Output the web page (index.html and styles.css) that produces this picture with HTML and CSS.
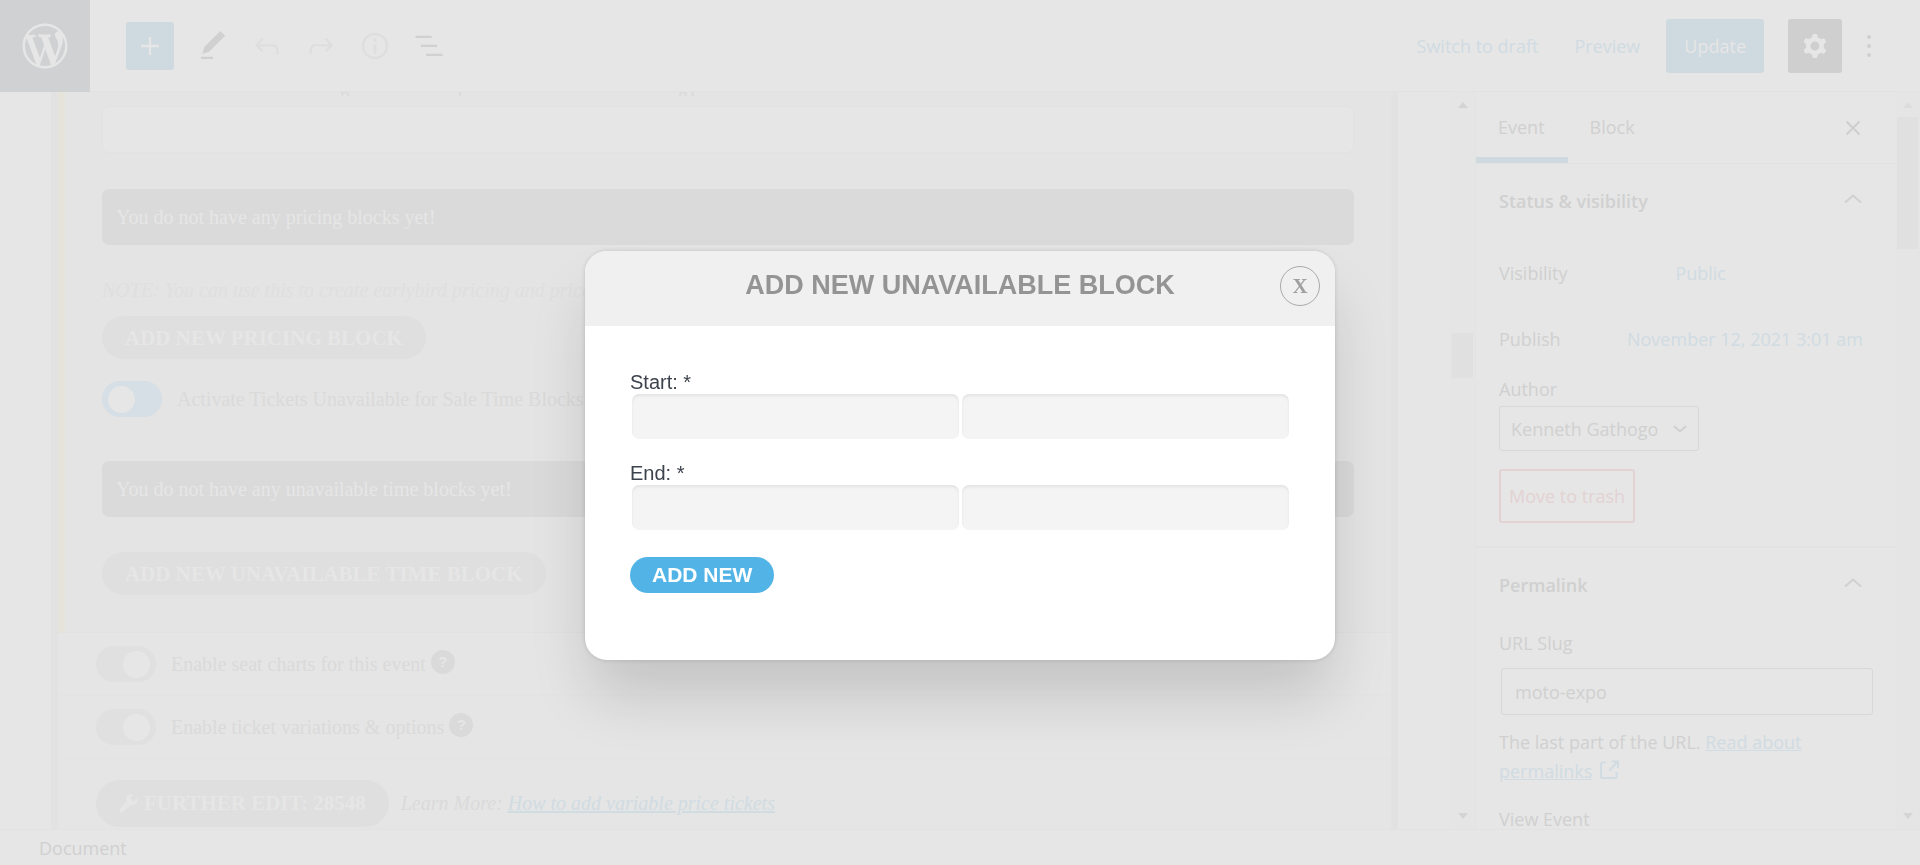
FILE: index.html
```html
<!DOCTYPE html>
<html lang="en">
<head>
<meta charset="utf-8">
<meta name="viewport" content="width=device-width, initial-scale=1">
<title>Edit Event</title>
<link rel="stylesheet" href="styles.css">
</head>
<body>
<div class="editor">
  <header class="topbar">
    <a class="logo" href="#" aria-label="View events">
      <svg width="54" height="54" viewBox="0 0 24 24" fill="currentColor"><path d="M20 10c0-5.51-4.49-10-10-10C4.48 0 0 4.49 0 10c0 5.52 4.48 10 10 10 5.51 0 10-4.48 10-10zM7.78 15.37L4.37 6.22c.55-.02 1.17-.08 1.17-.08.5-.06.44-1.13-.06-1.11 0 0-1.45.11-2.37.11-.18 0-.37 0-.58-.01C4.12 2.69 6.87 1.11 10 1.11c2.33 0 4.45.87 6.05 2.34-.68-.11-1.65.39-1.65 1.58 0 .74.45 1.36.9 2.1.35.61.55 1.36.55 2.46 0 1.49-1.4 5-1.4 5l-3.03-8.37c.54-.02.82-.17.82-.17.5-.05.44-1.25-.06-1.22 0 0-1.44.12-2.38.12-.87 0-2.33-.12-2.33-.12-.5-.03-.56 1.2-.06 1.22l.92.08 1.26 3.41zM17.41 10c.24-.64.74-1.87.43-4.25.7 1.29 1.05 2.71 1.05 4.25 0 3.29-1.73 6.24-4.4 7.78.97-2.59 1.94-5.2 2.92-7.78zM6.1 18.09C3.12 16.65 1.11 13.53 1.11 10c0-1.3.23-2.48.72-3.59C3.25 10.3 4.67 14.2 6.1 18.09zm4.03-6.63l2.58 6.98c-.86.29-1.76.45-2.71.45-.79 0-1.57-.11-2.29-.33.81-2.38 1.62-4.74 2.42-7.1z" transform="translate(2 2)"/></svg>
    </a>
    <div class="tools">
      <button class="tool add" aria-label="Add block"><svg width="36" height="36" viewBox="0 0 24 24" fill="currentColor"><path d="M18 11.2h-5.2V6h-1.6v5.2H6v1.6h5.2V18h1.6v-5.2H18z"/></svg></button>
      <button class="tool" aria-label="Tools"><svg width="36" height="36" viewBox="0 0 24 24" fill="currentColor"><path d="M20.1 5.1L16.9 2 6.2 12.7l-1.3 4.4 4.5-1.3L20.1 5.1zM4 19.2h8v1.5H4z"/></svg></button>
      <button class="tool faint" aria-label="Undo"><svg width="36" height="36" viewBox="0 0 24 24" fill="currentColor"><path d="M18.3 11.7c-.6-.6-1.4-.9-2.3-.9H6.7l2.9-3.3-1.1-1-4.5 5L8.5 16l1-1-2.7-2.7H16c.5 0 .9.2 1.3.5 1 1 1 3.4 1 4.5v.3h1.5v-.2c0-1.5 0-4.3-1.5-5.7z"/></svg></button>
      <button class="tool faint" aria-label="Redo"><svg width="36" height="36" viewBox="0 0 24 24" fill="currentColor"><path d="M15.6 6.5l-1.1 1 2.9 3.3H8c-.9 0-1.7.3-2.3.9-1.4 1.5-1.4 4.2-1.4 5.6v.2h1.5v-.3c0-1.1 0-3.5 1-4.5.3-.3.7-.5 1.3-.5h9.2L14.5 15l1.1 1.1 4.6-4.6-4.6-5z"/></svg></button>
      <button class="tool faint" aria-label="Details"><svg width="36" height="36" viewBox="0 0 24 24" fill="currentColor"><path d="M12 3.2c-4.8 0-8.8 3.9-8.8 8.8 0 4.8 3.9 8.8 8.8 8.8 4.8 0 8.8-3.9 8.8-8.8 0-4.8-4-8.8-8.8-8.8zm0 16c-4 0-7.2-3.3-7.2-7.2C4.8 8 8 4.8 12 4.8s7.2 3.3 7.2 7.2c0 4-3.2 7.2-7.2 7.2zM11 17h2v-6h-2v6zm0-8h2V7h-2v2z"/></svg></button>
      <button class="tool" aria-label="List view"><svg width="36" height="36" viewBox="0 0 24 24" fill="currentColor"><path d="M13.8 5.2H3v1.5h10.8V5.2zm-3.6 12v1.5H21v-1.5H10.2zm7.2-6H6.6v1.5h10.8v-1.5z"/></svg></button>
    </div>
    <div class="actions">
      <button class="text-btn">Switch to draft</button>
      <button class="text-btn">Preview</button>
      <button class="update">Update</button>
      <button class="settings" aria-label="Settings"><svg width="36" height="36" viewBox="0 0 24 24" fill="currentColor"><path fill-rule="evenodd" d="M10.289 4.836A1 1 0 0111.275 4h1.306a1 1 0 01.987.836l.244 1.466c.787.26 1.503.679 2.108 1.218l1.393-.522a1 1 0 011.216.437l.653 1.130a1 1 0 01-.23 1.273l-1.148.944a6.025 6.025 0 010 2.435l1.149.946a1 1 0 01.23 1.272l-.653 1.130a1 1 0 01-1.216.437l-1.394-.522c-.605.540-1.320.958-2.108 1.218l-.244 1.466a1 1 0 01-.987.836h-1.306a1 1 0 01-.986-.836l-.244-1.466a5.995 5.995 0 01-2.108-1.218l-1.394.522a1 1 0 01-1.217-.436l-.653-1.131a1 1 0 01.230-1.272l1.149-.946a6.026 6.026 0 010-2.435l-1.148-.944a1 1 0 01-.230-1.272l.653-1.131a1 1 0 011.217-.437l1.393.522a5.994 5.994 0 012.108-1.218l.244-1.466zM14.929 12a3 3 0 11-6 0 3 3 0 016 0z"/></svg></button>
      <button class="more" aria-label="Options"><svg width="36" height="36" viewBox="0 0 36 36" fill="currentColor"><circle cx="18" cy="9" r="2"/><circle cx="18" cy="18" r="2"/><circle cx="18" cy="27" r="2"/></svg></button>
    </div>
  </header>

  <div class="workspace">
    <main class="canvas">
      <div class="meta">
        <section class="ticket-panel">
          <div class="cut-line" aria-hidden="true"><span class="c1">p</span><span class="c2">(</span><span>g)</span></div>
          <input class="wide-input" type="text" aria-label="Ticket details">
          <p class="notice first">You do not have any pricing blocks yet!</p>
          <p class="note">NOTE: You can use this to create earlybird pricing and price</p>
          <button class="pill">ADD NEW PRICING BLOCK</button>
          <label class="switch-row"><input class="switch on" type="checkbox" checked><span>Activate Tickets Unavailable for Sale Time Blocks</span><i class="help">?</i></label>
          <p class="notice second">You do not have any unavailable time blocks yet!</p>
          <button class="pill">ADD NEW UNAVAILABLE TIME BLOCK</button>
        </section>
        <div class="row"><label class="switch-row"><input class="switch" type="checkbox"><span>Enable seat charts for this event</span><i class="help">?</i></label></div>
        <div class="row"><label class="switch-row"><input class="switch" type="checkbox"><span>Enable ticket variations &amp; options</span><i class="help">?</i></label></div>
        <div class="row last">
          <button class="pill further"><svg width="19" height="19" viewBox="0 0 20 20" fill="currentColor"><path d="M19 4.500l-3.200 3-3-.8-.7-3L15.300.7C12.600-.3 9.600.8 8.300 3.200c-.8 1.500-.8 3.200-.2 4.700L1 15.200c-1 1-1 2.600 0 3.600s2.600 1 3.600 0l7.200-7.300c2.300.8 4.900.1 6.500-1.800 1.300-1.500 1.500-3.500.7-5.200z"/></svg>FURTHER EDIT: 28548</button>
          <p class="learn">Learn More: <a href="#">How to add variable price tickets</a></p>
        </div>
      </div>
    </main>
    <div class="scrollbar main-scroll"><span class="arrow up"></span><span class="thumb"></span><span class="arrow down"></span></div>

    <aside class="sidebar">
      <div class="tabs">
        <button class="tab active">Event</button>
        <button class="tab">Block</button>
        <button class="close-side" aria-label="Close settings"><svg width="16" height="16" viewBox="0 0 16 16" fill="none" stroke="currentColor" stroke-width="2"><path d="M1.500 1.500l13 13M14.500 1.500l-13 13"/></svg></button>
      </div>
      <section class="group status">
        <h2 class="group-title">Status &amp; visibility<svg width="18" height="10" viewBox="0 0 18 10" fill="none" stroke="currentColor" stroke-width="2"><path d="M1 8.500l8-7 8 7"/></svg></h2>
        <div class="field visibility"><span>Visibility</span><button class="text-btn">Public</button></div>
        <div class="field"><span>Publish</span><button class="text-btn">November 12, 2021 3:01 am</button></div>
        <label class="author-label" for="author">Author</label>
        <div class="select-wrap">
          <select id="author" class="author"><option>Kenneth Gathogo</option></select>
          <svg class="caret" width="14" height="8" viewBox="0 0 14 8" fill="none" stroke="currentColor" stroke-width="2"><path d="M1 1l6 5.500L13 1"/></svg>
        </div>
        <button class="trash">Move to trash</button>
      </section>
      <section class="group">
        <h2 class="group-title">Permalink<svg width="18" height="10" viewBox="0 0 18 10" fill="none" stroke="currentColor" stroke-width="2"><path d="M1 8.500l8-7 8 7"/></svg></h2>
        <label class="slug-label" for="slug">URL Slug</label>
        <input class="slug" id="slug" type="text" value="moto-expo">
        <p class="hint">The last part of the URL. <a href="#">Read about permalinks</a> <svg width="20" height="20" viewBox="0 0 20 20" fill="none" stroke="currentColor" stroke-width="2"><path d="M7 2.500H3.500Q2 2.500 2 4v12.500Q2 18 3.500 18H16q1.500 0 1.500-1.500V12M10.500 10.500L18.500 1.500M12.500 1.500H19V8"/></svg></p>
        <p class="view">View Event</p>
      </section>
    </aside>
    <div class="scrollbar side-scroll"><span class="arrow up"></span><span class="thumb"></span><span class="arrow down"></span></div>
  </div>
  <footer class="crumbs">Document</footer>
</div>

<div class="overlay">
  <div class="modal" role="dialog" aria-modal="true" aria-labelledby="modal-title">
    <div class="modal-head">
      <h1 id="modal-title">ADD NEW UNAVAILABLE BLOCK</h1>
      <button class="modal-close" aria-label="Close">X</button>
    </div>
    <form class="modal-body">
      <label for="start-date">Start: *</label>
      <div class="pair"><input id="start-date" type="text"><input type="text" aria-label="Start time"></div>
      <label for="end-date">End: *</label>
      <div class="pair"><input id="end-date" type="text"><input type="text" aria-label="End time"></div>
      <button class="submit" type="button">ADD NEW</button>
    </form>
  </div>
</div>
</body>
</html>
```
FILE: styles.css
```css
* { box-sizing: border-box; }
body, p, h1, h2 { margin: 0; }
body {
  background: #e6e6e6;
  color: #d0d0d0;
  font: 18px/28px "Open Sans", "Noto Sans", sans-serif;
  overflow: hidden;
}
button, input, select { font: inherit; color: inherit; margin: 0; }
button { border: 0; padding: 0; background: none; cursor: pointer; white-space: nowrap; }
svg { display: block; flex: none; }
a, .text-btn { color: #d0dbe2; }

.editor { display: flex; flex-direction: column; height: 100vh; }

/* Top bar */
.topbar { display: flex; flex: none; align-items: center; height: 92px; border-bottom: 1px solid #e2e2e2; }
.logo { display: grid; place-items: center; width: 90px; height: 92px; background: #d0d1d2; color: #e6e6e6; }
.tools { display: flex; align-items: center; gap: 18px; margin-left: 36px; }
.tool { display: grid; place-items: center; width: 36px; height: 48px; }
.tool.add { width: 48px; margin-right: 3px; background: #cfd9e0; border-radius: 3px; color: #e6e6e6; }
.tool.faint { color: #dedede; }
.actions { display: flex; align-items: center; margin-left: auto; padding-right: 33px; }
.actions .text-btn { margin-right: 36px; }
.update { height: 54px; padding: 0 18px; margin: 0 24px 0 -10px; background: #cfd9e0; border-radius: 3px; color: #e6e6e6; }
.settings { display: grid; place-items: center; width: 54px; height: 54px; background: #cfcfcf; border-radius: 3px; color: #e6e6e6; }
.more { margin-left: 9px; }

/* Editor canvas */
.workspace { display: flex; flex: 1; min-height: 0; overflow: hidden; }
.canvas { flex: 1; min-width: 0; overflow: hidden; padding: 0 52px 0 51px; }
.meta { height: 100%; border: solid #e2e2e2; border-width: 0 7px; background: #e5e5e5; font: 20px/24px "Liberation Serif", "Times New Roman", serif; color: #dadada; }
.ticket-panel { height: 541px; border-left: 7px solid #e5e3da; border-bottom: 1px solid #e1e1e1; padding: 0 37px; background: #e4e4e4; display: flow-root; }
.cut-line { display: flex; height: 4px; margin-bottom: 10px; overflow: hidden; padding-left: 238px; line-height: 2px; align-items: flex-end; }
.c1 { width: 118px; }
.c2 { width: 220px; }
.wide-input { display: block; width: 100%; height: 47px; border: 1px solid #e2e2e2; border-radius: 6px; background: #e6e6e6; }
.notice { width: 100%; height: 56px; padding: 0 14px; border-radius: 7px; background: #dadada; color: #e6e6e6; line-height: 56px; }
.notice.first { margin-top: 36px; }
.notice.second { margin: 44px 0 35px; }
.note { margin: 33px 0 14px; font-style: italic; color: #dfdfdf; }
.pill { display: flex; align-items: center; height: 43px; padding: 0 23px; border-radius: 24px; background: #dfdfdf; color: #e6e6e6; font-size: 21px; font-weight: 700; }
.switch-row { display: flex; align-items: center; }
.ticket-panel .switch-row { margin-top: 22px; }
.switch { appearance: none; flex: none; width: 60px; height: 36px; padding: 5px 6px; margin-right: 15px; border-radius: 18px; background: #e0e0e0; display: flex; justify-content: flex-end; }
.switch::before { content: ""; width: 27px; height: 27px; border-radius: 50%; background: #e6e6e6; }
.switch.on { background: #d5dfe5; justify-content: flex-start; }
.help { width: 24px; height: 24px; margin: 0 0 4px 5px; border-radius: 50%; background: #dadada; color: #e6e6e6; font: 700 15px/24px "Liberation Sans", Arial, sans-serif; text-align: center; }
.row { display: flex; align-items: center; height: 63px; padding: 0 38px; border-bottom: 1px solid #e3e3e3; }
.row.last { border: 0; height: 88px; gap: 12px; }
.further { height: 47px; gap: 6px; }
.learn { font-style: italic; }

/* Scroll bars */
.scrollbar { display: flex; flex: none; flex-direction: column; align-items: center; width: 25px; padding: 10px 0; background: #e5e5e5; }
.thumb { width: 21px; background: #e0e0e0; }
.main-scroll .thumb { height: 45px; margin: 225px 0 auto; }
.side-scroll .thumb { height: 132px; margin: 9px 0 auto; }
.arrow { border: 5px solid transparent; border-top-width: 0; border-bottom: 6px solid #d4d4d4; }
.arrow.down { border-top: 6px solid #d4d4d4; border-bottom: 0; }
.side-scroll .up { border-bottom-color: #dddddd; }

/* Settings sidebar */
.sidebar { flex: none; width: 420px; overflow: hidden; border-left: 1px solid #e3e3e3; }
.tabs { display: flex; height: 72px; border-bottom: 1px solid #e2e2e2; }
.tab { padding: 5px 23px 0 22px; border-bottom: 6px solid transparent; }
.tab.active { border-color: #cfd9e0; }
.close-side { margin-left: auto; padding-right: 34px; color: #cecece; }
.group { padding: 23px 24px 0 23px; border-bottom: 2px solid #e2e2e2; }
.group.status { height: 384px; }
.group-title { display: flex; align-items: center; justify-content: space-between; padding-right: 9px; font-size: 18px; font-weight: 600; line-height: 28px; }
.group-title svg { margin-bottom: 5px; }
.field { display: flex; justify-content: space-between; margin-top: 38px; padding-right: 8px; }
.field.visibility { margin-top: 44px; padding-right: 145px; }
.field .text-btn { line-height: 28px; }
.author-label { display: block; margin: 22px 0 3px; }
.select-wrap { display: grid; width: 200px; align-items: center; }
.author { grid-area: 1 / 1; appearance: none; width: 100%; height: 45px; padding: 0 11px; border: 1px solid #d8d8d8; border-radius: 3px; background: transparent; }
.caret { grid-area: 1 / 1; justify-self: end; margin-right: 12px; pointer-events: none; }
.trash { height: 54px; margin-top: 18px; padding: 0 8px; border: 2px solid #e3d2d3; border-radius: 3px; color: #e3d2d3; }
.slug-label { display: block; margin: 30px 0 11px; }
.slug { display: block; width: 372px; height: 47px; margin-left: 2px; padding: 0 13px; border: 1px solid #d8d8d8; border-radius: 3px; background: transparent; }
.hint { margin-top: 13px; line-height: 29px; }
.hint svg { display: inline-block; vertical-align: -2px; margin-left: 2px; color: #d0dbe2; }
.view { margin-top: 19px; }

.crumbs { flex: none; height: 36px; padding: 4px 39px; border-top: 1px solid #e2e2e2; }

/* Modal */
.overlay { position: fixed; inset: 0; display: flex; justify-content: center; align-items: flex-start; padding-top: 251px; font-family: "Liberation Sans", Arial, sans-serif; }
.modal { width: 750px; max-width: 100%; border-radius: 22px; background: #ffffff; box-shadow: 0 0 5px rgba(0, 0, 0, .15), 0 40px 60px -5px rgba(0, 0, 0, .15); overflow: hidden; }
.modal-head { display: grid; grid-template-columns: 40px 1fr 40px; padding: 15px; height: 75px; background: #f0f0f0; }
.modal-head h1 { grid-column: 2; font-size: 27px; line-height: 38px; font-weight: 700; color: #949494; text-align: center; }
.modal-close { width: 40px; height: 40px; border: 1px solid #a9a9a9; border-radius: 50%; color: #a0a0a0; font: 700 21px/36px "Liberation Serif", serif; }
.modal-body { padding: 44px 45px 67px; color: #3d434c; font-size: 20px; }
.modal-body label { display: block; line-height: 24px; }
.pair { display: flex; gap: 3px; margin: 0 1px 22px 2px; }
.pair input { flex: 1; min-width: 0; height: 45px; border: 0; border-radius: 7px; background: #f4f4f4; box-shadow: inset 0 2px 3px rgba(0, 0, 0, .07); }
.submit { display: block; height: 36px; margin-top: 27px; padding: 0 22px; border-radius: 18px; background: #52b4e6; color: #ffffff; font-size: 21px; font-weight: 700; }
```
